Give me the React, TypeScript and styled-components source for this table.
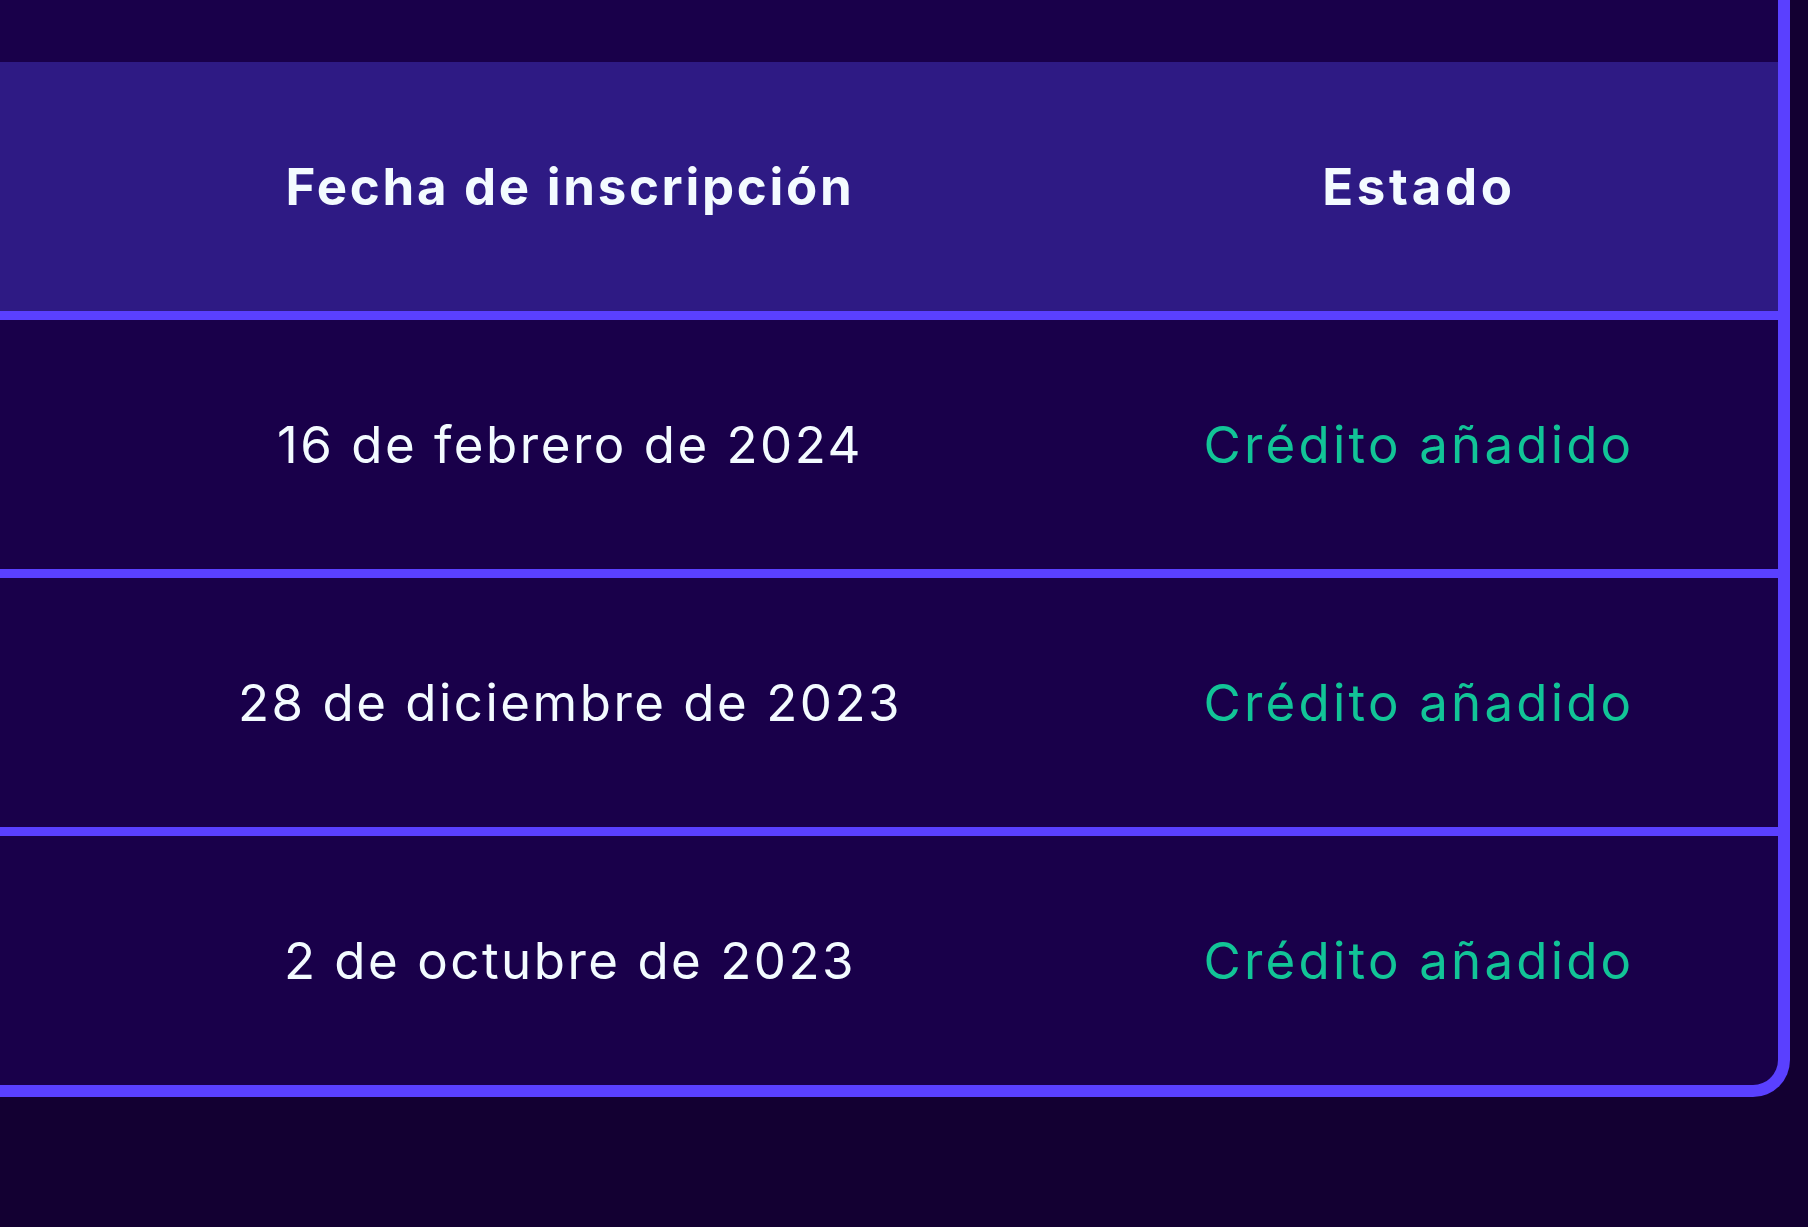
import { createGlobalStyle, styled } from "styled-components";

interface Enrollment {
  date: string;
  status: string;
}

const enrollments: Enrollment[] = [
  { date: "16 de febrero de 2024", status: "Crédito añadido" },
  { date: "28 de diciembre de 2023", status: "Crédito añadido" },
  { date: "2 de octubre de 2023", status: "Crédito añadido" },
];

const GlobalStyle = createGlobalStyle`
  html, body {
    margin: 0;
    padding: 0;
    background-color: #130032;
    min-height: 100vh;
  }

  body {
    font-family: Inter, "Open Sans", sans-serif;
  }
`;

export default function App() {
  return (
    <>
      <GlobalStyle />
      <Page>
        <TableWrapper>
          <TableTop />
          <HeaderRow>
            <HeaderCell>Fecha de inscripción</HeaderCell>
            <HeaderCell $status>Estado</HeaderCell>
          </HeaderRow>
          {enrollments.map((item, index) => (
            <BodyRow
              key={`enrollment-${item.date}`}
              $last={index === enrollments.length - 1}
            >
              <DateCell>{item.date}</DateCell>
              <StatusCell>{item.status}</StatusCell>
            </BodyRow>
          ))}
        </TableWrapper>
      </Page>
    </>
  );
}

const Page = styled.div`
  width: 1808px;
  height: 1227px;
  background-color: #130032;
  overflow: hidden;
`;

const TableWrapper = styled.div`
  width: 1778px;
  background-color: #19004a;
  border-right: 12px solid #5a40ff;
  border-bottom: 12px solid #5a40ff;
  border-bottom-right-radius: 37px;
  overflow: hidden;
`;

const TableTop = styled.div`
  height: 62px;
`;

const Row = styled.div`
  display: grid;
  grid-template-columns: 1140px 1fr;
  align-items: center;
  height: 249px;
`;

const HeaderRow = styled(Row)`
  background-color: #2e1a84;
  border-bottom: 9px solid #5a40ff;
`;

const BodyRow = styled(Row)<{ $last: boolean }>`
  border-bottom: ${(props) => (props.$last ? "none" : "9px solid #5a40ff")};
`;

const Cell = styled.div`
  text-align: center;
  font-size: 51px;
  line-height: 1;
  white-space: nowrap;
`;

const HeaderCell = styled(Cell)<{ $status?: boolean }>`
  color: #f3fbff;
  font-weight: 700;
  letter-spacing: ${(props) => (props.$status ? "3.7px" : "2.7px")};
  padding-right: ${(props) => (props.$status ? "80px" : "0")};
`;

const DateCell = styled(Cell)`
  color: #f3fbff;
  font-weight: 400;
  letter-spacing: 2.5px;
`;

const StatusCell = styled(Cell)`
  color: #12c497;
  font-weight: 400;
  letter-spacing: 3.2px;
  padding-right: 80px;
`;
